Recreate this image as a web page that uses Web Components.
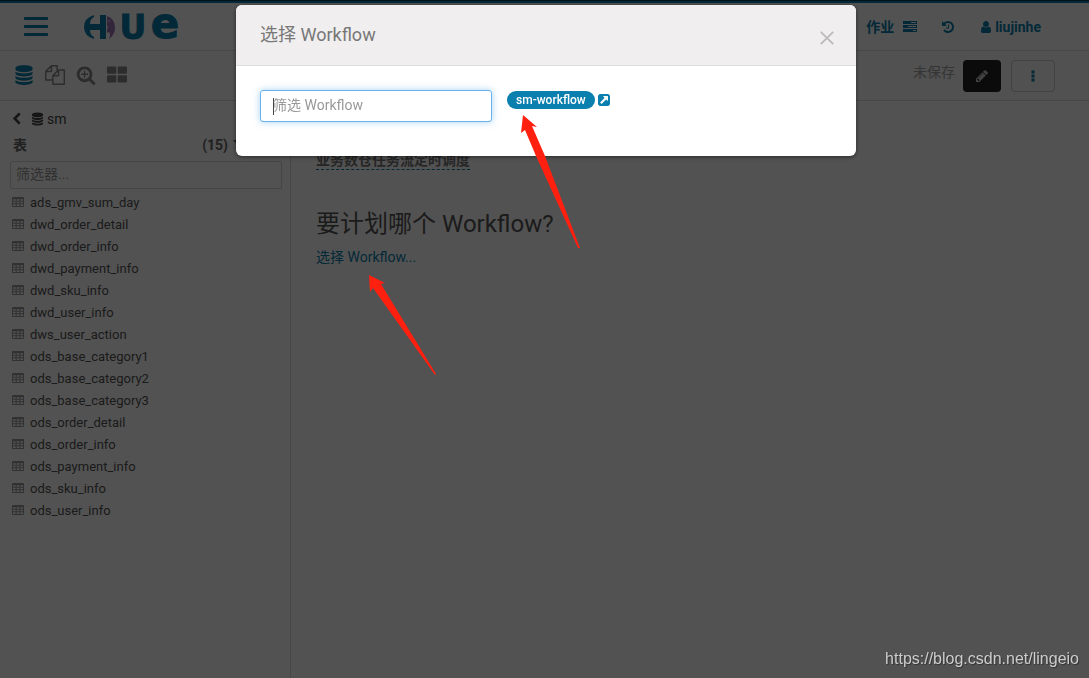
<!DOCTYPE html>
<html lang="zh-CN">
<head>
<meta charset="utf-8">
<title>Hue</title>
<style>
html, body {
	margin: 0;
	height: 100%;
}
body {
	background: #fff;
	color: #555;
	font: 14px/20px Roboto, "Noto Sans CJK SC", sans-serif;
	overflow: hidden;
	--blue: #0b7fad;
	--line: #dcdcdc;
}
</style>
</head>
<body>
<hue-app>
	<hue-header slot="header"></hue-header>
	<hue-toolbar slot="toolbar"></hue-toolbar>
	<table-assist slot="side" database="sm"></table-assist>
	<schedule-editor slot="main" name="业务数仓任务流定时调度"></schedule-editor>
</hue-app>
<hue-modal>
	<span slot="title">选择 Workflow</span>
	<workflow-picker></workflow-picker>
</hue-modal>
<pointer-arrows></pointer-arrows>
<site-mark>https://blog.csdn.net/lingeio</site-mark>

<script>
const ICONS = {
	user: '<path d="M1536 1399q0 109-62.5 187t-150.5 78h-854q-88 0-150.5-78t-62.5-187q0-85 8.5-160.5t31.5-152 58.5-131 94-89 134.5-34.5q131 128 313 128t313-128q76 0 134.5 34.5t94 89 58.5 131 31.5 152 8.5 160.5zm-256-887q0 159-112.5 271.5t-271.5 112.5-271.5-112.5-112.5-271.5 112.5-271.5 271.5-112.5 271.5 112.5 112.5 271.5z"/>',
	pencil: '<path d="M491 1536l91-91-235-235-91 91v107h128v128h107zm523-928q0-22-22-22-10 0-17 7l-542 542q-7 7-7 17 0 22 22 22 10 0 17-7l542-542q7-7 7-17zm-54-192l416 416-832 832h-416v-416zm683 96q0 53-37 90l-166 166-416-416 166-165q36-38 90-38 53 0 91 38l235 234q37 39 37 91z"/>',
	history: '<path d="M1664 896q0 156-61 298t-164 245-245 164-298 61q-172 0-327-72.5t-264-204.5q-7-10-6.5-22.5t8.5-20.5l137-138q10-9 25-9 16 2 23 12 73 95 179 147t225 52q104 0 198.5-40.5t163.5-109.5 109.5-163.5 40.5-198.5-40.5-198.5-109.5-163.5-163.5-109.5-198.5-40.5q-98 0-188 35.5t-160 101.5l137 138q31 30 14 69-17 40-59 40h-448q-26 0-45-19t-19-45v-448q0-42 40-59 39-17 69 14l130 129q107-101 244.5-156.5t284.5-55.5q156 0 298 61t245 164 164 245 61 298zm-640-288v448q0 14-9 23t-23 9h-320q-14 0-23-9t-9-23v-64q0-14 9-23t23-9h224v-352q0-14 9-23t23-9h64q14 0 23 9t9 23z"/>',
	database: '<path d="M896 768q237 0 443-43t325-127v170q0 69-103 128t-280 93.5-385 34.5-385-34.5-280-93.5-103-128v-170q119 84 325 127t443 43zm0 768q237 0 443-43t325-127v170q0 69-103 128t-280 93.5-385 34.5-385-34.5-280-93.5-103-128v-170q119 84 325 127t443 43zm0-384q237 0 443-43t325-127v170q0 69-103 128t-280 93.5-385 34.5-385-34.5-280-93.5-103-128v-170q119 84 325 127t443 43zm0-1152q208 0 385 34.5t280 93.5 103 128v128q0 69-103 128t-280 93.5-385 34.5-385-34.5-280-93.5-103-128v-128q0-69 103-128t280-93.5 385-34.5z"/>',
	zoom: '<path d="M1088 800v64q0 13-9.5 22.5t-22.5 9.5h-224v224q0 13-9.5 22.5t-22.5 9.5h-64q-13 0-22.5-9.5t-9.5-22.5v-224h-224q-13 0-22.5-9.5t-9.5-22.5v-64q0-13 9.5-22.5t22.5-9.5h224v-224q0-13 9.5-22.5t22.5-9.5h64q13 0 22.5 9.5t9.5 22.5v224h224q13 0 22.5 9.5t9.5 22.5zm128 32q0-185-131.5-316.5t-316.5-131.5-316.5 131.5-131.5 316.5 131.5 316.5 316.5 131.5 316.5-131.5 131.5-316.5zm512 832q0 53-37.5 90.5t-90.5 37.5q-54 0-90-38l-343-342q-179 124-399 124-143 0-273.5-55.5t-225-150-150-225-55.5-273.5 55.5-273.5 150-225 225-150 273.5-55.5 273.5 55.5 225 150 150 225 55.5 273.5q0 220-124 399l343 343q37 37 37 90z"/>',
	files: '<path d="M1696 384q40 0 68 28t28 68v1216q0 40-28 68t-68 28h-960q-40 0-68-28t-28-68v-288h-544q-40 0-68-28t-28-68v-672q0-40 20-88t48-76l408-408q28-28 76-48t88-20h416q40 0 68 28t28 68v328q68-40 128-40h416zm-544 213l-299 299h299v-299zm-640-384l-299 299h299v-299zm196 647l316-316v-416h-384v416q0 40-28 68t-68 28h-416v640h512v-256q0-40 20-88t48-76zm956 804v-1152h-384v416q0 40-28 68t-68 28h-416v640h896z"/>',
	back: '<path d="M1427 301l-531 531 531 531q19 19 19 45t-19 45l-166 166q-19 19-45 19t-45-19l-742-742q-19-19-19-45t19-45l742-742q19-19 45-19t45 19l166 166q19 19 19 45t-19 45z"/>',
	external: '<path d="M1408 928v-480q0-26-19-45t-45-19h-480q-42 0-59 39-17 41 14 70l144 144-534 534q-19 19-19 45t19 45l102 102q19 19 45 19t45-19l534-534 144 144q18 19 45 19 12 0 25-5 39-17 39-59zm256-512v960q0 119-84.5 203.5t-203.5 84.5h-960q-119 0-203.5-84.5t-84.5-203.5v-960q0-119 84.5-203.5t203.5-84.5h960q119 0 203.5 84.5t84.5 203.5z"/>',
	grid: '<path d="M90 130h650q90 0 90 90v470q0 90-90 90h-650q-90 0-90-90v-470q0-90 90-90zM1050 130h650q90 0 90 90v470q0 90-90 90h-650q-90 0-90-90v-470q0-90 90-90zM90 910h650q90 0 90 90v470q0 90-90 90h-650q-90 0-90-90v-470q0-90 90-90zM1050 910h650q90 0 90 90v470q0 90-90 90h-650q-90 0-90-90v-470q0-90 90-90z"/>',
	table: '<path fill-rule="evenodd" d="M150 150h1492q150 0 150 150v1192q0 150-150 150h-1492q-150 0-150-150v-1192q0-150 150-150zM150 500v200h400v-200zM700 500v200h400v-200zM1250 500v200h400v-200zM150 850v250h400v-250zM700 850v250h400v-250zM1250 850v250h400v-250zM150 1250v250h400v-250zM700 1250v250h400v-250zM1250 1250v250h400v-250z"/>',
	tasks: '<path fill-rule="evenodd" d="M0 128h1792v384h-1792zM1024 256v128h640v-128zM0 640h1792v384h-1792zM640 768v128h1024v-128zM0 1152h1792v384h-1792zM1280 1280v128h384v-128z"/>',
	filter: '<path d="M130 260h1530l-590 620v780l-350-260v-520z"/>',
	more: '<path d="M704 192h384v384h-384zM704 704h384v384h-384zM704 1216h384v384h-384z"/>',
	menu: '<rect width="1792" height="224" rx="60"/><rect y="597" width="1792" height="224" rx="60"/><rect y="1194" width="1792" height="224" rx="60"/>',
	close: '<path d="M100 100L1692 1692M1692 100L100 1692" fill="none" stroke="currentColor" stroke-width="230"/>',
};

function attach(el, css, html) {
	const template = document.createElement("template");
	template.innerHTML = `<style>${css}</style>${html}`;
	el.attachShadow({ mode: "open" }).appendChild(template.content.cloneNode(true));
}

class HueIcon extends HTMLElement {
	constructor() {
		super();
		attach(this, `
:host {
	display: inline-block;
	flex: none;
	width: 14px;
	height: 14px;
}
svg {
	display: block;
	width: 100%;
	height: 100%;
	fill: currentColor;
}`, `<svg viewBox="0 0 1792 1792" aria-hidden="true"></svg>`);
	}
	static get observedAttributes() {
		return ['name'];
	}
	attributeChangedCallback(name, oldval, newval) {
		this.shadowRoot.querySelector('svg').innerHTML = ICONS[newval] || '';
	}
}
customElements.define("hue-icon", HueIcon);

class HueApp extends HTMLElement {
	constructor() {
		super();
		attach(this, `
:host {
	display: flex;
	flex-direction: column;
	min-height: 100vh;
}
#stripe {
	height: 1px;
	background: #0b3952;
	border-bottom: 2px solid var(--blue);
}
#body {
	display: flex;
	flex: 1;
}
aside {
	box-sizing: border-box;
	width: 291px;
	flex: none;
	border-right: 1px solid var(--line);
}
main {
	flex: 1;
	min-width: 0;
}`, `<div id="stripe"></div><slot name="header"></slot><slot name="toolbar"></slot>
<div id="body"><aside><slot name="side"></slot></aside><main><slot name="main"></slot></main></div>`);
	}
}
customElements.define("hue-app", HueApp);

class HueLogo extends HTMLElement {
	constructor() {
		super();
		attach(this, `
:host {
	display: block;
}
svg {
	display: block;
	overflow: visible;
	fill: var(--blue);
}
text {
	font-family: "DejaVu Sans", sans-serif;
	font-weight: bold;
	text-anchor: middle;
	stroke: var(--blue);
	stroke-width: 1px;
}
.cap { font-size: 33px; }
.low { font-size: 42px; }`,
`<svg width="98" height="26" viewBox="0 0 98 26" role="img" aria-label="Hue">
	<path d="M10 1Q0 4 0 13t10 12v-2Q6 21 6 16h10v9h6V1h-6v9H6Q6 5 10 3z"/>
	<path fill="#a276b5" d="M23 2q8 3 8 11t-6 12q2-4 0-7l-2 1v-4l1-2-1-1z"/>
	<path fill="#fff" d="M24 7l2-1-1 2z"/>
	<text class="cap" x="49" y="25">U</text>
	<text class="low" x="81" y="24">e</text>
</svg>`);
	}
}
customElements.define("hue-logo", HueLogo);

class HueHeader extends HTMLElement {
	constructor() {
		super();
		attach(this, `
:host {
	display: flex;
	align-items: center;
	height: 47px;
	padding: 0 48px 0 24px;
	border-bottom: 1px solid var(--line);
	color: var(--blue);
}
button {
	padding: 0;
	border: 0;
	background: none;
	color: inherit;
}
#menu {
	display: flex;
	margin-right: 36px;
}
#menu hue-icon {
	width: 24px;
	height: 24px;
	margin-top: 5px;
}
nav {
	display: flex;
	align-items: center;
	gap: 24px;
	margin-left: auto;
}
a {
	display: flex;
	align-items: center;
	gap: 9px;
	color: inherit;
	font-weight: bold;
	text-decoration: none;
}
#user {
	gap: 2px;
}`, `<button id="menu" aria-label="菜单"><hue-icon name="menu"></hue-icon></button>
<hue-logo></hue-logo>
<nav>
	<a href="#jobs">作业<hue-icon name="tasks"></hue-icon></a>
	<a href="#history" aria-label="历史"><hue-icon name="history"></hue-icon></a>
	<a href="#user" id="user"><hue-icon name="user"></hue-icon>liujinhe</a>
</nav>`);
	}
}
customElements.define("hue-header", HueHeader);

class HueToolbar extends HTMLElement {
	constructor() {
		super();
		attach(this, `
:host {
	display: flex;
	align-items: center;
	justify-content: space-between;
	height: 49px;
	padding: 0 34px 0 14px;
	border-bottom: 1px solid var(--line);
	background: #fbfbfb;
}
div {
	display: flex;
	align-items: center;
	gap: 11px;
}
button {
	display: flex;
	align-items: center;
	justify-content: center;
	padding: 0;
	border: 0;
	background: none;
	color: #888;
}
#sources {
	padding-bottom: 2px;
}
#sources hue-icon {
	width: 20px;
	height: 20px;
}
#sources .on {
	color: var(--blue);
}
#state {
	padding-bottom: 8px;
	color: #a5a5a5;
}
#actions {
	gap: 8px;
}
#actions button {
	box-sizing: border-box;
	width: 38px;
	height: 32px;
	border-radius: 4px;
	background: #222;
	color: #ccc;
}
#actions #more {
	width: 44px;
	margin-left: 2px;
	border: 1px solid #ccc;
	background: none;
	color: var(--blue);
}`, `<div id="sources">
	<button class="on" aria-label="数据库"><hue-icon name="database"></hue-icon></button>
	<button aria-label="文档"><hue-icon name="files"></hue-icon></button>
	<button aria-label="搜索"><hue-icon name="zoom"></hue-icon></button>
	<button aria-label="应用"><hue-icon name="grid"></hue-icon></button>
</div>
<div id="actions">
	<span id="state">未保存</span>
	<button aria-label="编辑"><hue-icon name="pencil"></hue-icon></button>
	<button id="more" aria-label="更多"><hue-icon name="more"></hue-icon></button>
</div>`);
	}
}
customElements.define("hue-toolbar", HueToolbar);

const TABLES = [
	"ads_gmv_sum_day", "dwd_order_detail", "dwd_order_info", "dwd_payment_info", "dwd_sku_info",
	"dwd_user_info", "dws_user_action", "ods_base_category1", "ods_base_category2", "ods_base_category3",
	"ods_order_detail", "ods_order_info", "ods_payment_info", "ods_sku_info", "ods_user_info"
];

class TableAssist extends HTMLElement {
	constructor() {
		super();
		attach(this, `
:host {
	display: block;
	padding: 8px 8px 0 10px;
}
#path, #heading {
	display: flex;
	align-items: center;
}
#path {
	color: #444;
}
#path a {
	display: flex;
	margin-right: 8px;
	color: inherit;
}
#path hue-icon {
	width: 13px;
}
#path span {
	margin-left: 3px;
}
#heading {
	gap: 4px;
	height: 32px;
	padding: 0 36px 0 3px;
	font-weight: bold;
	color: #666;
}
#count {
	margin-left: auto;
}
input {
	box-sizing: border-box;
	display: block;
	width: 100%;
	height: 28px;
	padding: 0 5px 2px;
	border: 1px solid #d5d5d5;
	border-radius: 2px;
	background: none;
	font: inherit;
}
input::placeholder {
	color: #999;
	opacity: 1;
}
ul {
	margin: 3px 0 0;
	padding: 0;
	list-style: none;
}
li a {
	display: flex;
	align-items: center;
	gap: 6px;
	height: 22px;
	padding-left: 2px;
	color: #555;
	font-size: 13px;
	text-decoration: none;
}
li hue-icon {
	width: 12px;
	height: 12px;
	margin-bottom: 2px;
	color: #999;
}`, `<div id="path"><a href="#back" aria-label="返回"><hue-icon name="back"></hue-icon></a><hue-icon name="database"></hue-icon><span></span></div>
<div id="heading">表<span id="count"></span><hue-icon name="filter"></hue-icon></div>
<input type="text" placeholder="筛选器..." aria-label="筛选器">
<ul></ul>`);
	}
	connectedCallback() {
		this.shadowRoot.querySelector('#path span').textContent = this.getAttribute("database");
		this.shadowRoot.querySelector('#count').textContent = `(${TABLES.length})`;
		this.shadowRoot.querySelector('ul').innerHTML = TABLES
			.map(t => `<li><a href="#${t}"><hue-icon name="table"></hue-icon>${t}</a></li>`).join('');
	}
}
customElements.define("table-assist", TableAssist);

class ScheduleEditor extends HTMLElement {
	constructor() {
		super();
		attach(this, `
:host {
	display: block;
	padding: 49px 25px 0;
}
#name {
	display: inline-block;
	height: 19px;
	border-bottom: 1px dashed var(--blue);
	color: #777;
	font-weight: bold;
}
h3 {
	margin: 34px 0 3px;
	font-size: 24px;
	line-height: 40px;
	font-weight: normal;
}
a {
	color: var(--blue);
	text-decoration: none;
}`, `<span id="name"></span><h3>要计划哪个 Workflow?</h3><a href="#choose">选择 Workflow...</a>`);
	}
	connectedCallback() {
		this.shadowRoot.querySelector('#name').textContent = this.getAttribute("name");
	}
}
customElements.define("schedule-editor", ScheduleEditor);

class HueModal extends HTMLElement {
	constructor() {
		super();
		attach(this, `
:host {
	position: fixed;
	inset: 0;
	z-index: 10;
	display: flex;
	justify-content: center;
	align-items: flex-start;
	padding: 5px 0 0 3px;
	background: rgba(0, 0, 0, 0.68);
}
#box {
	width: 620px;
	max-width: 100%;
	border-radius: 6px;
	background: #fff;
	box-shadow: 0 1px 4px rgba(0, 0, 0, 0.5);
	overflow: hidden;
}
header {
	display: flex;
	align-items: center;
	justify-content: space-between;
	height: 60px;
	padding: 0 22px 0 24px;
	border-bottom: 1px solid #ddd;
	background: #f0eeee;
}
h2 {
	margin: 0;
	color: #777;
	font-size: 18px;
	font-weight: normal;
}
button {
	display: flex;
	padding: 6px 0 0;
	border: 0;
	background: none;
	color: #bbb;
}`, `<div id="box" role="dialog" aria-modal="true">
	<header><h2><slot name="title"></slot></h2><button aria-label="关闭"><hue-icon name="close"></hue-icon></button></header>
	<slot></slot>
</div>`);
		this.shadowRoot.querySelector('button').addEventListener('click', () => this.remove());
	}
}
customElements.define("hue-modal", HueModal);

class WorkflowPicker extends HTMLElement {
	constructor() {
		super();
		attach(this, `
:host {
	display: flex;
	align-items: flex-start;
	gap: 15px;
	padding: 24px 24px 34px;
}
input {
	box-sizing: border-box;
	width: 232px;
	height: 32px;
	padding: 0 12px 2px;
	border: 1px solid #66b3ee;
	border-radius: 3px;
	outline: 0;
	/* text cursor of the focused box */
	background: linear-gradient(#444, #444) 12px 7px / 1px 17px no-repeat #fff;
	box-shadow: 0 0 7px rgba(82, 168, 236, 0.5);
	caret-color: transparent;
	font: inherit;
}
input::placeholder {
	color: #999;
	opacity: 1;
}
div {
	display: flex;
	align-items: center;
	gap: 2px;
	padding-top: 1px;
}
a {
	display: flex;
	color: var(--blue);
	text-decoration: none;
}
#pill {
	padding: 0 9px;
	border-radius: 9px;
	background: var(--blue);
	color: #fff;
	font-size: 12px;
	line-height: 18px;
	font-weight: 500;
}`, `<input type="text" placeholder="筛选 Workflow" aria-label="筛选 Workflow">
<div><a id="pill" href="#sm-workflow">sm-workflow</a><a href="#open" aria-label="打开"><hue-icon name="external"></hue-icon></a></div>`);
	}
}
customElements.define("workflow-picker", WorkflowPicker);

class PointerArrows extends HTMLElement {
	constructor() {
		super();
		attach(this, `
:host {
	position: fixed;
	inset: 0;
	z-index: 20;
	pointer-events: none;
}
svg {
	display: block;
	fill: #ff2010;
}`, `<svg width="100%" height="100%" aria-hidden="true">
	<path d="M523 115L537 127L532 126L545 156L580 248L578 248L536 156L525 130L521 133z"/>
	<path d="M369 275L385 283L381 284L436 374L435 375L373 288L370 292z"/>
</svg>`);
	}
}
customElements.define("pointer-arrows", PointerArrows);

class SiteMark extends HTMLElement {
	constructor() {
		super();
		attach(this, `
:host {
	position: fixed;
	right: 10px;
	bottom: 9px;
	z-index: 20;
	color: #ccc;
	font: 16px/20px "Liberation Sans", sans-serif;
	text-shadow: 1px 1px 1px rgba(0, 0, 0, 0.4);
}`, `<slot></slot>`);
	}
}
customElements.define("site-mark", SiteMark);
</script>
</body>
</html>
